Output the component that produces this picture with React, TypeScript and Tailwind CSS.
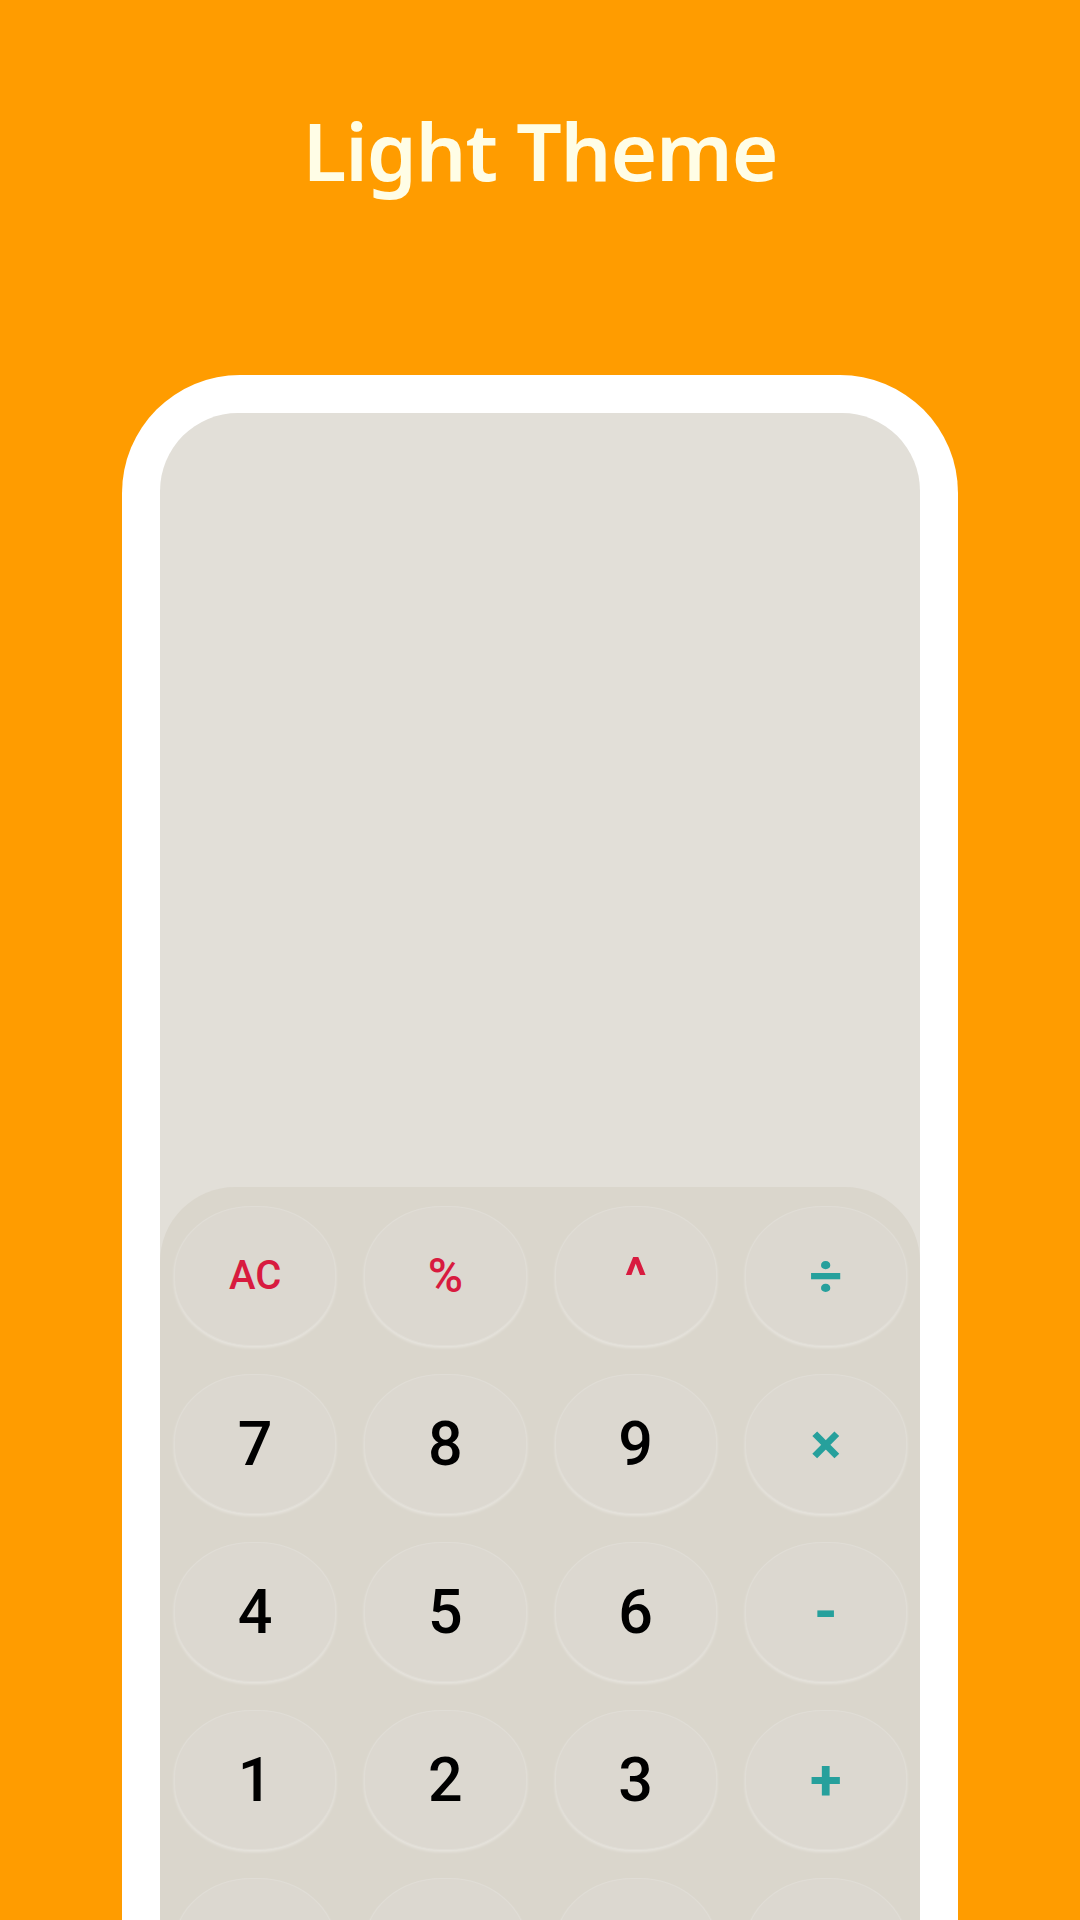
import React from 'react';

type Key = {
    label: string;
    tone: 'num' | 'red' | 'teal';
    size: string;
};

const keys: Key[] = [
    { label: 'AC', tone: 'red', size: 'text-[40px] font-medium' },
    { label: '%', tone: 'red', size: 'text-[48px] font-medium' },
    { label: '^', tone: 'red', size: 'text-[50px] font-bold' },
    { label: '÷', tone: 'teal', size: 'text-[58px] font-bold' },
    { label: '7', tone: 'num', size: 'text-[61px] font-medium' },
    { label: '8', tone: 'num', size: 'text-[61px] font-medium' },
    { label: '9', tone: 'num', size: 'text-[61px] font-medium' },
    { label: '×', tone: 'teal', size: 'text-[58px] font-bold' },
    { label: '4', tone: 'num', size: 'text-[61px] font-medium' },
    { label: '5', tone: 'num', size: 'text-[61px] font-medium' },
    { label: '6', tone: 'num', size: 'text-[61px] font-medium' },
    { label: '-', tone: 'teal', size: 'text-[60px] font-bold' },
    { label: '1', tone: 'num', size: 'text-[61px] font-medium' },
    { label: '2', tone: 'num', size: 'text-[61px] font-medium' },
    { label: '3', tone: 'num', size: 'text-[61px] font-medium' },
    { label: '+', tone: 'teal', size: 'text-[58px] font-bold' },
];

const toneClass = {
    num: 'text-black',
    red: 'text-[#D81B3F]',
    teal: 'text-[#26A09C]',
};

// bottom row sits below the fold, only its tops show
const lowerRow = ['zero', 'dot', 'back', 'equals'];

const keyShape =
    'h-[140px] rounded-[48%] bg-[#DCD8D0] border border-[#E0DDD6] shadow-[0_2px_3px_rgba(255,255,255,0.35)] flex items-center justify-center';

const CalcKey: React.FC<{ k: Key }> = ({ k }) => {
    return (
        <div className={keyShape}>
            <span className={`leading-none font-['Roboto',sans-serif] ${k.size} ${toneClass[k.tone]}`}>{k.label}</span>
        </div>
    );
};

const App: React.FC = () => {
    return (
        <div className="w-[1080px] h-[1920px] overflow-hidden bg-[#FF9C00] flex flex-col">
            <div className="shrink-0 pt-[110px] h-[192px] flex justify-center">
                <h1 className="text-[80px] leading-none font-semibold tracking-[-0.015em] text-[#FFFDE6] font-['Noto_Sans',sans-serif]">
                    Light Theme
                </h1>
            </div>
            <div className="shrink-0 mt-[183px] mx-auto w-[836px] flex-1 bg-white rounded-t-[118px] px-[38px] pt-[38px] flex flex-col">
                <div className="flex-1 bg-[#E2DFD8] rounded-t-[78px] flex flex-col">
                    <div className="shrink-0 h-[774px]" />
                    <div className="flex-1 bg-[#DAD6CC] rounded-t-[75px] pl-[14px] pr-[13px] pt-[19px] grid grid-cols-4 gap-x-[28px] gap-y-[28px] content-start">
                        {keys.map((k) => (
                            <CalcKey key={k.label} k={k} />
                        ))}
                        {lowerRow.map((id) => (
                            <div key={id} className={keyShape} />
                        ))}
                    </div>
                </div>
            </div>
        </div>
    );
};

export default App;
